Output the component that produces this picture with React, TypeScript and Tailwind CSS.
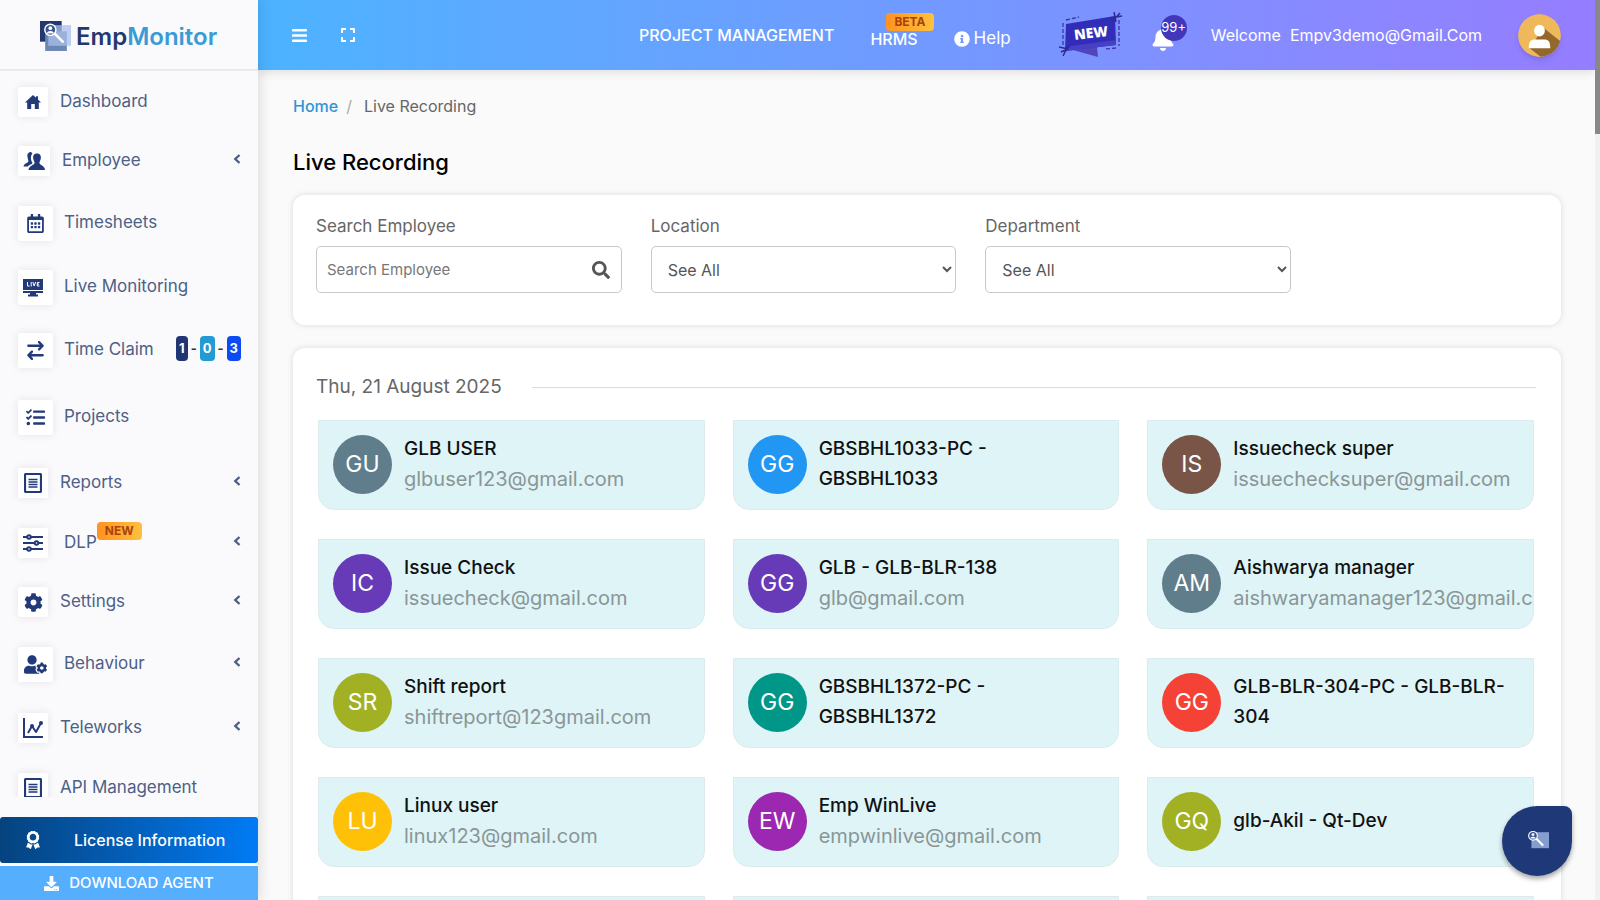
import type { ReactNode } from 'react';
import { FaBars, FaExpand, FaInfoCircle, FaBell, FaSearch, FaRegCalendarAlt, FaTasks, FaCog, FaUserCog, FaDownload, FaAward } from 'react-icons/fa';
import { FaArrowRightArrowLeft } from 'react-icons/fa6';

function LogoMark({ className, tile = true }: { className: string; tile?: boolean }) {
  return (
    <svg viewBox="0 0 30 30" className={className} aria-hidden="true">
      {tile && <rect x="0" y="0" width="21" height="20" fill="#22386f" />}
      {tile && <rect x="5" y="10" width="21" height="19" fill="#6d87b5" />}
      <rect x="8" y="4" width="22" height="20" fill="#a9bfec" opacity="0.75" />
      <path d="M14 12 L22 20" stroke="#fff" strokeWidth="2.6" strokeLinecap="round" />
      <circle cx="10" cy="8.5" r="5.4" fill="#3c5590" stroke="#fff" strokeWidth="1.4" />
      <circle cx="10" cy="7" r="1.8" fill="#fff" />
      <path d="M6.5 12 C7 8.8 13 8.8 13.5 12 Z" fill="#fff" />
    </svg>
  );
}

function HomeIcon() {
  return (
    <svg viewBox="0 0 16 14" className="h-[14px] w-4" fill="currentColor" aria-hidden="true">
      <path d="M8 0 L11 2.800 V1.200 H13 V4.600 L16 7.500 H13.800 V14 H9.800 V9 H6.200 V14 H2.200 V7.500 H0 Z" />
    </svg>
  );
}

function EmployeeIcon() {
  return (
    <svg viewBox="0 0 22 20" className="h-5 w-[22px]" fill="currentColor" aria-hidden="true">
      <path d="M8 1 C5 1 4 3.5 4.5 6 C4.8 8 5.4 9 5.4 10.5 C5 12 1 12.3 0.5 15.5 H5 C6 13.500 9 13.6 9.5 12 C7.5 9 7.3 5 9.5 2.5 Z" />
      <path d="M14 2.5 C10.8 2.5 9.8 4.8 10.2 7.4 C10.5 9.2 11.3 10.2 11.6 11.5 C11.8 14.5 6 14 5.5 19 H22 C21.7 14 16.2 14.5 16.4 11.5 C16.7 10.2 17.5 9.2 17.8 7.4 C18.2 4.8 17.2 2.5 14 2.5 Z" />
    </svg>
  );
}

function LiveIcon() {
  return (
    <svg viewBox="0 0 20 18" className="h-[18px] w-5" aria-hidden="true">
      <path fill="currentColor" d="M0 0 H20 V11 H0 Z M0 12 H20 V14 H13 V15.5 H15 V17.5 H5 V15.5 H7 V14 H0 Z" />
      <path fill="none" stroke="#fff" strokeWidth="1" d="M4.500 3 V7 H6.5 M8.2 3 V7.5 M9.8 3 L11.2 7 L12.6 3 M16.5 3.5 H14.3 V7 H16.5 M14.3 5.2 H16" />
    </svg>
  );
}

function ReportIcon() {
  return (
    <svg viewBox="0 0 18 20" className="h-5 w-[18px]" fill="none" stroke="currentColor" aria-hidden="true">
      <rect x="1" y="1" width="16" height="18" rx="1" strokeWidth="2.2" />
      <path d="M4.500 6.5 H13.500 M4.500 9 H13.500 M4.500 11.5 H13.500 M4.500 14 H13.500" strokeWidth="1.3" />
    </svg>
  );
}

function SlidersIcon() {
  return (
    <svg viewBox="0 0 20 18" className="h-[18px] w-5" stroke="currentColor" fill="#fff" strokeWidth="2" aria-hidden="true">
      <path d="M0 3 H20 M0 9 H20 M0 15 H20" />
      <circle cx="6" cy="3" r="1.8" />
      <circle cx="13.5" cy="9" r="1.8" />
      <circle cx="6" cy="15" r="1.8" />
    </svg>
  );
}

function ChartIcon() {
  return (
    <svg viewBox="0 0 20 20" className="size-5" stroke="currentColor" fill="none" strokeWidth="2" aria-hidden="true">
      <path d="M1 0 V19 H20" />
      <path d="M5 15 L9 8 L13 14 L18 5" strokeLinejoin="round" />
      <circle cx="9" cy="8" r="1" fill="currentColor" />
      <circle cx="18" cy="5" r="1" fill="currentColor" />
    </svg>
  );
}

function ArrowLeft() {
  return (
    <svg viewBox="0 0 8 10" className="mb-1 ml-auto h-[10px] w-2" stroke="currentColor" fill="none" strokeWidth="2.4" aria-hidden="true">
      <path d="M6.500 1 L2.300 5 L6.500 9" />
    </svg>
  );
}

function NewRibbon() {
  return (
    <svg viewBox="0 0 64 46" className="h-[46px] w-16" role="img" aria-label="New">
      <path d="M14 38 L38 35 L39 45 Z" fill="#5145b9" />
      <path d="M7 12 L56 4 L57 33 L6 39 Z" fill="#322db8" />
      <path d="M6 39 L57 33 L57 28 L12 34 Z" fill="#473fc4" />
      <path d="M4 33 V9 M7 8 L20 5 M60 8 V34 M57 36 L46 37" stroke="#3a369f" strokeWidth="1.3" strokeDasharray="4 2" fill="none" />
      <path d="M51 6 L63 4 M55 0 L57 10 M53 10 L61 1 M0 35 L9 37 M4 44 L9 34 M2 40 L9 37" stroke="#2d2a92" strokeWidth="1.5" fill="none" />
      <text x="32" y="26" textAnchor="middle" transform="rotate(-7 32 22)" fill="#fff" fontSize="14" fontWeight="800" fontFamily="Open Sans, sans-serif">NEW</text>
    </svg>
  );
}

function Avatar() {
  return (
    <svg viewBox="0 0 44 44" className="size-[43px] rounded-full shadow-md" aria-hidden="true">
      <defs><clipPath id="avatar-disc"><circle cx="22" cy="22" r="22" /></clipPath></defs>
      <g clipPath="url(#avatar-disc)">
        <rect width="44" height="44" fill="#efb85a" />
        <path d="M26 14 L46 30 V46 H26 L12 35 Z" fill="#94682b" />
      </g>
      <ellipse cx="22" cy="17" rx="5.5" ry="6" fill="#fff" />
      <path d="M11 35 C11 28 13 26 17 26 H27 C31 26 33 28 33 35 Z" fill="#fff" />
    </svg>
  );
}

function Tag({ children, place }: { children: ReactNode; place: string }) {
  return (
    <span className={'absolute rounded bg-linear-to-r from-[#ff9220] to-[#ffc03c] px-2 text-xs leading-[18px] font-bold text-[#a8430c] ' + place}>
      {children}
    </span>
  );
}

type NavItem = { label: string; icon: ReactNode; arrow?: boolean; tag?: string; counts?: boolean; row: string; tile: string };

const small = 'w-[30px] h-[30px] mr-3';
const large = 'w-[35px] h-[35px] mr-[11px]';

const nav: NavItem[] = [
  { label: 'Dashboard', icon: <HomeIcon />, row: 'h-[58px]', tile: small },
  { label: 'Employee', icon: <EmployeeIcon />, arrow: true, row: 'h-[60px]', tile: 'h-[30px] w-8 mr-3' },
  { label: 'Timesheets', icon: <FaRegCalendarAlt size={19} />, row: 'h-[65px]', tile: large },
  { label: 'Live Monitoring', icon: <LiveIcon />, row: 'h-[63px]', tile: large + ' pr-[5px]' },
  { label: 'Time Claim', icon: <FaArrowRightArrowLeft size={19} />, counts: true, row: 'h-[63px]', tile: large },
  { label: 'Projects', icon: <FaTasks size={19} />, row: 'h-[70px]', tile: large },
  { label: 'Reports', icon: <ReportIcon />, arrow: true, row: 'h-[62px]', tile: small },
  { label: 'DLP', icon: <SlidersIcon />, arrow: true, tag: 'NEW', row: 'h-[58px]', tile: 'w-[30px] h-[30px] mr-4' },
  { label: 'Settings', icon: <FaCog size={19} />, arrow: true, row: 'h-[60px]', tile: small },
  { label: 'Behaviour', icon: <FaUserCog size={23} />, arrow: true, row: 'h-[64px]', tile: large },
  { label: 'Teleworks', icon: <ChartIcon />, arrow: true, row: 'h-[64px]', tile: small },
  { label: 'API Management', icon: <ReportIcon />, row: 'h-[56px]', tile: small },
];

function Counts() {
  return (
    <span className="mb-1 ml-auto flex items-center gap-[3px] text-[13px] leading-[25px] font-bold text-[#333]">
      <span className="rounded bg-[#1f3673] px-[3px] text-white">1</span>-
      <span className="rounded bg-[#229bd5] px-[3px] text-white">0</span>-
      <span className="rounded bg-[#0b4cf2] px-[3px] text-white">3</span>
    </span>
  );
}

function Sidebar() {
  return (
    <aside className="relative z-10 flex w-[258px] shrink-0 flex-col bg-[#fafafc] shadow-[2px_0_12px_rgba(0,0,0,0.12)]">
      <a href="#home" className="flex h-[71px] shrink-0 items-center border-b-2 border-[#e9e9ee] pt-1 pl-10 text-2xl font-semibold text-[#22386f]">
        <LogoMark className="mr-[5px] size-[31px]" />
        <span>Emp<span className="text-[#3a9bd5]">Monitor</span></span>
      </a>
      <nav className="min-h-0 flex-1 overflow-hidden pt-[2px]">
        <ul>
          {nav.map((item) => (
            <li key={item.label}>
              <a href={'#' + item.label} className={'flex items-center pr-[17px] pl-[18px] text-[#4d6086] ' + item.row}>
                <span className={'flex shrink-0 items-center justify-center rounded-[2px] bg-white text-[#22397a] shadow-[0_0_10px_rgba(0,0,0,0.09)] ' + item.tile}>
                  {item.icon}
                </span>
                <span className="relative mb-[3px] text-[17px] leading-6 whitespace-nowrap">
                  {item.label}
                  {item.tag && <Tag place="bottom-[14px] left-full">{item.tag}</Tag>}
                </span>
                {item.counts && <Counts />}
                {item.arrow && <ArrowLeft />}
              </a>
            </li>
          ))}
        </ul>
      </nav>
      <div className="shrink-0 pt-5">
        <a href="#license" className="flex h-[46px] items-center rounded-[3px] bg-linear-to-r from-[#05437f] to-[#007bf5] pl-6 text-base font-medium text-white">
          <FaAward size={18} />
          <span className="ml-8">License Information</span>
        </a>
        <button type="button" className="mt-[3px] flex h-[34px] w-full items-center justify-center gap-[10px] bg-[#56aeff] text-[15px] font-medium text-white">
          <FaDownload size={15} />
          DOWNLOAD AGENT
        </button>
      </div>
    </aside>
  );
}

function Header() {
  return (
    <header className="flex h-[70px] shrink-0 items-center bg-linear-to-r from-[#4bb3ff] via-[#7199ff] to-[#957dff] pr-[34px] pl-[33px] text-base text-white shadow-[0_2px_10px_rgba(0,0,0,0.12)]">
      <button type="button" aria-label="Menu"><FaBars size={17} /></button>
      <button type="button" aria-label="Full screen" className="ml-8"><FaExpand size={16} /></button>
      <a href="#projects" className="ml-auto font-medium">PROJECT MANAGEMENT</a>
      <a href="#hrms" className="relative mt-2 ml-9 font-medium">
        HRMS
        <Tag place="bottom-5 left-4">BETA</Tag>
      </a>
      <a href="#help" className="mt-2 ml-9 flex items-center gap-1 text-[17px]"><FaInfoCircle size={16} />Help</a>
      <a href="#new" className="ml-12"><NewRibbon /></a>
      <button type="button" aria-label="Notifications" className="relative ml-7 flex h-9 w-9 items-end pb-[2px]">
        <FaBell size={24} />
        <span className="absolute -top-[2px] right-0 flex size-[26px] items-center justify-center rounded-full bg-[#4237bb] text-[13px]">99+</span>
      </button>
      <span className="ml-6 whitespace-pre">Welcome  Empv3demo@Gmail.Com</span>
      <button type="button" aria-label="Account" className="ml-9"><Avatar /></button>
    </header>
  );
}

type Person = { initials: string; color: string; name: string; email?: string };

const people: Person[] = [
  { initials: 'GU', color: 'bg-[#607d8b]', name: 'GLB USER', email: 'glbuser123@gmail.com' },
  { initials: 'GG', color: 'bg-[#2196f3]', name: 'GBSBHL1033-PC - GBSBHL1033' },
  { initials: 'IS', color: 'bg-[#795548]', name: 'Issuecheck super', email: 'issuechecksuper@gmail.com' },
  { initials: 'IC', color: 'bg-[#673ab7]', name: 'Issue Check', email: 'issuecheck@gmail.com' },
  { initials: 'GG', color: 'bg-[#673ab7]', name: 'GLB - GLB-BLR-138', email: 'glb@gmail.com' },
  { initials: 'AM', color: 'bg-[#607d8b]', name: 'Aishwarya manager', email: 'aishwaryamanager123@gmail.com' },
  { initials: 'SR', color: 'bg-[#a2b123]', name: 'Shift report', email: 'shiftreport@123gmail.com' },
  { initials: 'GG', color: 'bg-[#009688]', name: 'GBSBHL1372-PC - GBSBHL1372' },
  { initials: 'GG', color: 'bg-[#f44336]', name: 'GLB-BLR-304-PC - GLB-BLR-304' },
  { initials: 'LU', color: 'bg-[#ffc107]', name: 'Linux user', email: 'linux123@gmail.com' },
  { initials: 'EW', color: 'bg-[#9c27b0]', name: 'Emp WinLive', email: 'empwinlive@gmail.com' },
  { initials: 'GQ', color: 'bg-[#a2b123]', name: 'glb-Akil - Qt-Dev' },
];

function PersonCard({ person }: { person: Person }) {
  return (
    <li className="flex h-[90px] items-center overflow-hidden rounded-b-2xl border border-[#dcecee] bg-[#def4f6] pb-[2px] pl-[14px]">
      <span className={'flex size-[59px] shrink-0 items-center justify-center rounded-full text-[23px] text-white ' + person.color}>
        {person.initials}
      </span>
      <div className={'ml-3 min-w-0 flex-1 text-[19px] leading-[30px] ' + (person.email ? '' : 'pr-6')}>
        <p className={'font-medium text-[#111] ' + (person.name.startsWith('GBS') ? 'max-w-52' : '')}>{person.name}</p>
        {person.email && <p className="overflow-hidden text-xl leading-[30px] whitespace-nowrap text-[#8a9697]">{person.email}</p>}
      </div>
    </li>
  );
}

function SelectField({ id, label }: { id: string; label: string }) {
  return (
    <div>
      <label htmlFor={id} className="block text-[17px] leading-6 text-[#666]">{label}</label>
      <select id={id} className="mt-2 h-[47px] w-full rounded-[5px] border border-[#c8c8c8] bg-white px-3 text-base text-[#555]">
        <option>See All</option>
      </select>
    </div>
  );
}

const panel = 'rounded-xl bg-white pr-[25px] pl-[23px] shadow-[0_0_6px_rgba(0,0,0,0.13)]';

export default function App() {
  return (
    <div className="flex h-screen overflow-hidden bg-[#fafafa] font-['Inter','Noto_Sans',sans-serif]">
      <Sidebar />
      <div className="flex min-w-0 flex-1 flex-col">
        <Header />
        <main className="min-h-0 flex-1 overflow-hidden pt-[25px] pr-[34px] pl-[35px]">
          <nav aria-label="Breadcrumb" className="flex gap-2 text-base leading-[22px] text-[#666]">
            <a href="#home" className="font-medium text-[#2f95d8]">Home</a>
            <span className="text-[#aaa]">/</span>
            <span className="ml-1">Live Recording</span>
          </nav>
          <h1 className="mt-[31px] text-[22px] leading-7 font-medium text-black">Live Recording</h1>
          <section className={'mt-[19px] grid h-[130px] grid-cols-[repeat(3,minmax(0,1fr))_216px] gap-[29px] pt-[19px] ' + panel}>
            <div>
              <label htmlFor="search" className="block text-[17px] leading-6 text-[#666]">Search Employee</label>
              <div className="mt-2 flex h-[47px] items-center rounded-[5px] border border-[#c8c8c8] pr-[11px] pl-[10px]">
                <input id="search" type="text" placeholder="Search Employee" className="min-w-0 flex-1 pt-[2px] text-[15px] text-[#555] outline-none placeholder:text-[#777]" />
                <button type="button" aria-label="Search" className="text-[#555]"><FaSearch size={18} /></button>
              </div>
            </div>
            <SelectField id="location" label="Location" />
            <SelectField id="department" label="Department" />
          </section>
          <section className={'mt-[23px] pt-6 ' + panel}>
            <h2 className="flex items-center gap-[30px] text-[19px] leading-[30px] text-[#666] after:h-px after:flex-1 after:bg-[#dcdcdc] after:content-['']">
              Thu, 21 August 2025
            </h2>
            <ul className="mt-[18px] grid grid-cols-3 gap-x-7 gap-y-[29px] px-[2px]">
              {people.map((person) => <PersonCard key={person.name} person={person} />)}
              {[0, 1, 2].map((n) => <li key={n} className="h-[90px] rounded-b-2xl border border-[#dcecee] bg-[#def4f6]" />)}
            </ul>
          </section>
        </main>
      </div>
      <div aria-hidden="true" className="w-[5px] shrink-0 bg-[#f1f1f1]"><div className="h-[134px] bg-[#888]" /></div>
      <button type="button" aria-label="Open chat" className="fixed right-[28px] bottom-6 z-20 flex size-[70px] items-center justify-center rounded-[35px] rounded-tr-lg bg-[#1f3878] shadow-[0_3px_5px_rgba(0,0,0,0.35)]">
        <LogoMark tile={false} className="size-6" />
      </button>
    </div>
  );
}
